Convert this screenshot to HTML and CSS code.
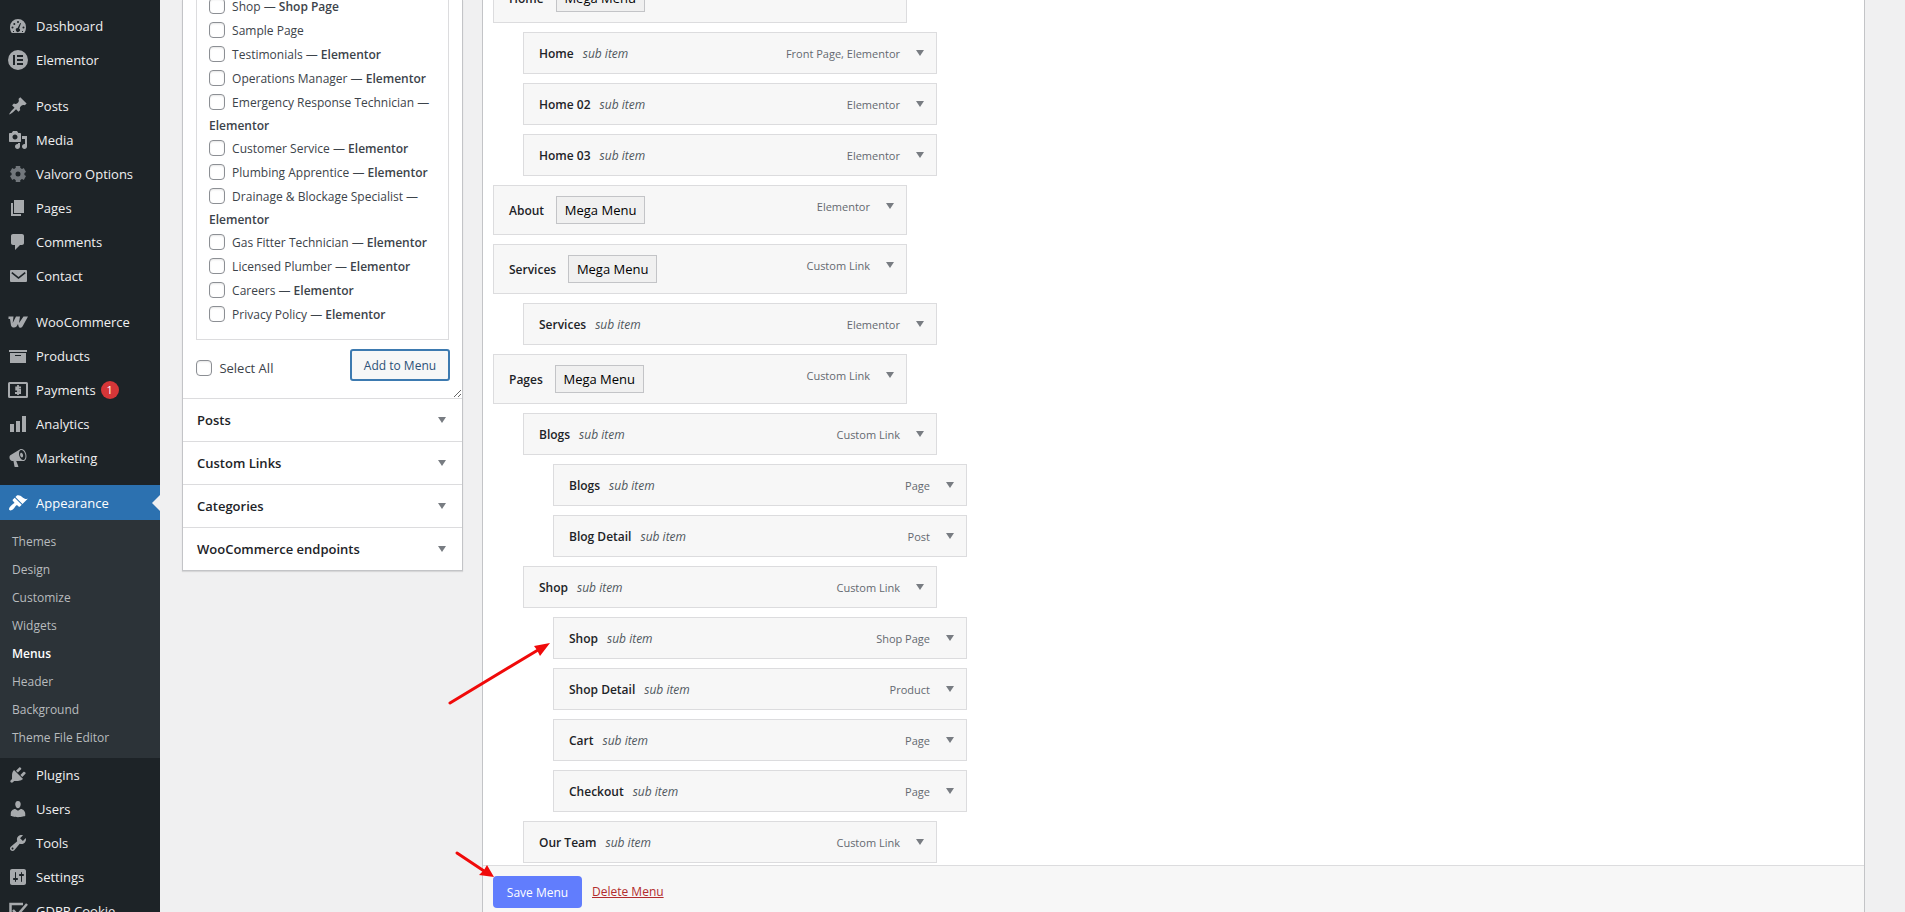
FILE: index.html
```html
<!DOCTYPE html>
<html lang="en">
<head>
    <meta charset="utf-8">
    <meta name="viewport" content="width=device-width, initial-scale=1">
    <title>Menus</title>
    <link rel="stylesheet" href="styles.css">
</head>
<body>
    <nav class="sidebar">
        <ul class="admin-menu">
            <li><a href="#"><svg viewBox="0 0 20 20"><path fill-rule="evenodd" d="M3.8 17h12.4c1.3-1.6 1.8-3.7 1.8-6a8 8 0 0 0-16 0c0 2.3.5 4.4 1.8 6zM9 6a1 1 0 1 0 2 0 1 1 0 1 0-2 0zM5.3 8a1 1 0 1 0 2 0 1 1 0 1 0-2 0zM3.5 11.5a1 1 0 1 0 2 0 1 1 0 1 0-2 0zM14.5 11.5a1 1 0 1 0 2 0 1 1 0 1 0-2 0zM13 7.2l-1.9 5.2a2 2 0 1 1-1.5-.4L12.2 7zM5 15h1v1H5zM14 15h1v1h-1z"/></svg>Dashboard</a></li>
            <li><a href="#"><svg viewBox="0 0 20 20"><path fill-rule="evenodd" d="M10 0a10 10 0 1 0 0 20 10 10 0 0 0 0-20zM5 5h2v10H5zM9 5h6v2H9zM9 9h6v2H9zM9 13h6v2H9z"/></svg>Elementor</a></li>
            <li class="separator"></li>
            <li><a href="#"><svg viewBox="0 0 20 20"><path d="M10.44 3.02l1.82-1.82 6.36 6.35-1.83 1.82c-1.05-.68-2.48-.57-3.41.36l-.75.75c-.92.93-1.04 2.35-.35 3.41l-1.83 1.82-2.41-2.41-2.8 2.79c-.42.42-3.38 2.71-3.8 2.29s1.86-3.39 2.28-3.81l2.79-2.79L4.1 9.36l1.83-1.82c1.05.69 2.48.57 3.4-.36l.75-.75c.93-.92 1.05-2.35.36-3.41z"/></svg>Posts</a></li>
            <li><a href="#"><svg viewBox="0 0 20 20"><path d="M13 11V4c0-.55-.45-1-1-1h-1.67L9 1H5L3.67 3H2c-.55 0-1 .45-1 1v7c0 .55.45 1 1 1h10c.55 0 1-.45 1-1zM7 4.5c1.38 0 2.5 1.12 2.5 2.5S8.38 9.5 7 9.5 4.5 8.38 4.5 7 5.62 4.5 7 4.5zM14 6h5v10.5c0 1.38-1.12 2.5-2.5 2.5S14 17.88 14 16.5s1.12-2.5 2.5-2.5c.17 0 .34.02.5.05V9h-3V6zm-4 8.05V13h2v3.5c0 1.38-1.12 2.5-2.5 2.5S7 17.88 7 16.5 8.12 14 9.5 14c.17 0 .34.02.5.05z"/></svg>Media</a></li>
            <li><a href="#"><svg class="dim" viewBox="0 0 20 20"><circle cx="10" cy="10" r="4.5" fill="none" stroke="currentColor" stroke-width="4"/><path d="M10 2v3M10 15v3M3.1 6l2.6 1.5M14.3 12.5l2.6 1.5M3.1 14l2.6-1.5M14.3 7.5l2.6-1.5" stroke="currentColor" stroke-width="4.5"/></svg>Valvoro Options</a></li>
            <li><a href="#"><svg viewBox="0 0 20 20"><path d="M6 15V2h10v13H6zm-1 1h8v2H3V5h2v11z"/></svg>Pages</a></li>
            <li><a href="#"><svg viewBox="0 0 20 20"><path d="M5 2h9c1.1 0 2 .9 2 2v7c0 1.1-.9 2-2 2h-2l-5 5v-5H5c-1.1 0-2-.9-2-2V4c0-1.1.9-2 2-2z"/></svg>Comments</a></li>
            <li><a href="#"><svg viewBox="0 0 20 20"><path fill-rule="evenodd" d="M3 4h15a1 1 0 0 1 1 1v10a1 1 0 0 1-1 1H3a1 1 0 0 1-1-1V5a1 1 0 0 1 1-1zM4.3 6L3.3 7.2l7.2 5.9 7.2-5.9-1-1.2-6.2 5z"/></svg>Contact</a></li>
            <li class="separator"></li>
            <li><a href="#"><svg viewBox="0 0 20 20"><path d="M.5 4.5h5l-.8 6.5L8 4.5h4l-1 6.5 4.5-6.500H20l-5.500 10c-1.500 2-3.500 1.500-4-.5l-.5-2-1.500 2.500C6.500 16.500 3.500 15.500 3 13.500L2 7H.5z"/></svg>WooCommerce</a></li>
            <li><a href="#"><svg viewBox="0 0 20 20"><path d="M19 4v2H1V4h18zM2 7h16v10H2V7zm11 3V9H7v1h6z"/></svg>Products</a></li>
            <li><a href="#"><svg viewBox="0 0 20 20"><path fill-rule="evenodd" d="M1.5 2h17A1.5 1.5 0 0 1 20 3.5v13a1.5 1.5 0 0 1-1.5 1.5h-17A1.5 1.5 0 0 1 0 16.5v-13A1.5 1.5 0 0 1 1.5 2zM2 4v12h16V4z"/><path d="M13 7.3H8.2v2.4h3.9v3.3H7M10 5v10" fill="none" stroke="currentColor" stroke-width="1.8"/></svg>Payments <span class="badge">1</span></a></li>
            <li><a href="#"><svg viewBox="0 0 20 20"><path d="M18 18V2h-4v16h4zm-6 0V7H8v11h4zm-6 0v-8H2v8h4z"/></svg>Analytics</a></li>
            <li><a href="#"><svg viewBox="0 0 20 20"><path d="M18.15 5.94c.46 1.62.38 3.22-.02 4.48-.42 1.28-1.26 2.18-2.3 2.48-.16.06-.26.06-.4.06-.06.02-.12.02-.18.02-.06.02-.14.02-.22.02h-6.8l2.22 5.5c.02.14-.06.26-.14.34-.08.1-.24.16-.34.16H6.95c-.1 0-.26-.06-.34-.16-.08-.08-.16-.2-.14-.34l-1-5.5H4.25l-.02-.02c-.5.06-1.08-.18-1.54-.62s-.88-1.08-1.06-1.88c-.24-.8-.2-1.56-.02-2.2.18-.62.58-1.08 1.06-1.3l.02-.02 9-5.4c.1-.06.18-.1.24-.16.06-.04.14-.08.24-.12.16-.08.28-.12.5-.18 1.04-.3 2.24.1 3.22.98s1.84 2.24 2.26 3.86zm-2.58 5.98h-.02c.4-.1.74-.34 1.04-.7.58-.7.86-1.76.86-3.04 0-.64-.1-1.3-.28-1.98-.34-1.36-1.02-2.5-1.78-3.24s-1.68-1.1-2.46-.88c-.82.22-1.4.96-1.7 2-.32 1.04-.28 2.36.06 3.72.38 1.36 1 2.5 1.8 3.24.78.74 1.62 1.1 2.48.88zm-2.54-7.08c.22-.04.42-.02.62.04.38.16.76.48 1.02 1s.42 1.2.42 1.78c0 .3-.04.56-.12.8-.18.48-.44.84-.86.94-.34.1-.8-.06-1.14-.4s-.64-.86-.78-1.5c-.18-.62-.12-1.24.02-1.72s.48-.84.82-.94z"/></svg>Marketing</a></li>
            <li class="separator slim"></li>
            <li class="current">
                <a href="#"><svg viewBox="0 0 20 20"><path d="M14.48 11.06L7.41 3.99l1.5-1.5c.5-.56 2.3-.47 3.51.32 1.21.8 1.43 1.28 2.91 2.1 1.18.64 2.45 1.26 4.45.85zm-.71.71L6.7 4.7 4.93 6.47c-.39.39-.39 1.02 0 1.41l1.06 1.06c.39.39.39 1.03 0 1.42-.6.6-1.43 1.11-2.21 1.69-.35.26-.7.53-1.01.84C1.43 14.23.4 16.08 1.4 17.07c.99 1 2.84-.03 4.18-1.36.31-.31.58-.66.85-1.02.57-.78 1.08-1.61 1.69-2.21.39-.39 1.02-.39 1.41 0l1.06 1.06c.39.39 1.02.39 1.41 0z"/></svg>Appearance</a>
                <ul class="submenu">
                    <li><a href="#">Themes</a></li>
                    <li><a href="#">Design</a></li>
                    <li><a href="#">Customize</a></li>
                    <li><a href="#">Widgets</a></li>
                    <li><a href="#" class="active">Menus</a></li>
                    <li><a href="#">Header</a></li>
                    <li><a href="#">Background</a></li>
                    <li><a href="#">Theme File Editor</a></li>
                </ul>
            </li>
            <li><a href="#"><svg viewBox="0 0 20 20"><path d="M13.11 4.36L9.87 7.6 8 5.73l3.24-3.24c.35-.34 1.05-.2 1.56.32.52.51.66 1.21.31 1.55zm-8 1.77l.91-1.12 9.01 9.01-1.19.84c-.71.71-2.63 1.16-3.82 1.16H6.14L4.9 17.26c-.59.59-1.54.59-2.12 0-.59-.58-.59-1.53 0-2.12l1.24-1.24v-3.88c0-1.13.4-3.19 1.09-3.89zm7.26 3.97l3.24-3.24c.34-.35 1.04-.21 1.55.31.52.51.66 1.21.31 1.55l-3.24 3.25z"/></svg>Plugins</a></li>
            <li><a href="#"><svg viewBox="0 0 20 20"><path d="M10 9.25c-2.27 0-2.73-3.44-2.73-3.44C7 4.02 7.82 2 9.97 2c2.16 0 2.98 2.02 2.71 3.81 0 0-.41 3.44-2.68 3.44zm0 2.57L12.72 10c2.39 0 4.52 2.33 4.52 4.53v2.49s-3.65 1.13-7.24 1.13c-3.65 0-7.24-1.13-7.24-1.13v-2.49c0-2.25 1.94-4.48 4.47-4.48z"/></svg>Users</a></li>
            <li><a href="#"><svg viewBox="0 0 20 20"><path d="M16.68 9.77c-1.34 1.34-3.3 1.67-4.95.99l-5.41 6.52c-.99.99-2.59.99-3.58 0s-.99-2.59 0-3.57l6.52-5.42c-.68-1.65-.35-3.61.99-4.95 1.28-1.28 3.12-1.62 4.72-1.06l-2.89 2.89 2.82 2.82 2.86-2.87c.53 1.58.18 3.39-1.08 4.65zM3.81 16.21c.4.39 1.04.39 1.43 0 .4-.4.4-1.04 0-1.43-.39-.4-1.03-.4-1.43 0-.39.39-.39 1.03 0 1.43z"/></svg>Tools</a></li>
            <li><a href="#"><svg viewBox="0 0 20 20"><path d="M18 16V4c0-1.1-.9-2-2-2H4c-1.1 0-2 .9-2 2v12c0 1.1.9 2 2 2h12c1.1 0 2-.9 2-2zM8 11h1c.55 0 1 .45 1 1s-.45 1-1 1H8v1.5c0 .28-.22.5-.5.5s-.5-.22-.5-.5V13H6c-.55 0-1-.45-1-1s.45-1 1-1h1V5.5c0-.28.22-.5.5-.5s.5.22.5.5V11zm5-2h-1c-.55 0-1-.45-1-1s.45-1 1-1h1V5.5c0-.28.22-.5.5-.5s.5.22.5.5V7h1c.55 0 1 .45 1 1s-.45 1-1 1h-1v5.5c0 .28-.22.5-.5.5s-.5-.22-.5-.5V9z"/></svg>Settings</a></li>
            <li><a href="#"><svg viewBox="0 0 20 20"><path d="M15 3H2.5v15h14v-7M5 9l4.5 5L19 3" fill="none" stroke="currentColor" stroke-width="2.5"/></svg>GDPR Cookie</a></li>
        </ul>
    </nav>

    <main>
        <!-- Add menu items -->
        <section class="accordion">
            <div class="pages-panel">
                <ul class="checklist">
                    <li><label><input type="checkbox"> Shop — <b>Shop Page</b></label></li>
                    <li><label><input type="checkbox"> Sample Page</label></li>
                    <li><label><input type="checkbox"> Testimonials — <b>Elementor</b></label></li>
                    <li><label><input type="checkbox"> Operations Manager — <b>Elementor</b></label></li>
                    <li class="wrapped"><label><input type="checkbox"> Emergency Response Technician — <b>Elementor</b></label></li>
                    <li><label><input type="checkbox"> Customer Service — <b>Elementor</b></label></li>
                    <li><label><input type="checkbox"> Plumbing Apprentice — <b>Elementor</b></label></li>
                    <li class="wrapped"><label><input type="checkbox"> Drainage &amp; Blockage Specialist — <b>Elementor</b></label></li>
                    <li><label><input type="checkbox"> Gas Fitter Technician — <b>Elementor</b></label></li>
                    <li><label><input type="checkbox"> Licensed Plumber — <b>Elementor</b></label></li>
                    <li><label><input type="checkbox"> Careers — <b>Elementor</b></label></li>
                    <li><label><input type="checkbox"> Privacy Policy — <b>Elementor</b></label></li>
                </ul>
                <div class="panel-actions">
                    <label><input type="checkbox"> Select All</label>
                    <button type="button" class="add-button">Add to Menu</button>
                </div>
            </div>
            <h3>Posts <span class="arrow"></span></h3>
            <h3>Custom Links <span class="arrow"></span></h3>
            <h3>Categories <span class="arrow"></span></h3>
            <h3>WooCommerce endpoints <span class="arrow"></span></h3>
        </section>

        <!-- Menu structure -->
        <section class="menu-edit">
            <ul class="menu-items">
                <li class="top"><b>Home</b><button type="button">Mega Menu</button></li>
                <li class="depth-1"><b>Home</b><i>sub item</i><span class="type">Front Page, Elementor</span><span class="arrow"></span></li>
                <li class="depth-1"><b>Home 02</b><i>sub item</i><span class="type">Elementor</span><span class="arrow"></span></li>
                <li class="depth-1"><b>Home 03</b><i>sub item</i><span class="type">Elementor</span><span class="arrow"></span></li>
                <li class="top"><b>About</b><button type="button">Mega Menu</button><span class="type">Elementor</span><span class="arrow"></span></li>
                <li class="top"><b>Services</b><button type="button">Mega Menu</button><span class="type">Custom Link</span><span class="arrow"></span></li>
                <li class="depth-1"><b>Services</b><i>sub item</i><span class="type">Elementor</span><span class="arrow"></span></li>
                <li class="top"><b>Pages</b><button type="button">Mega Menu</button><span class="type">Custom Link</span><span class="arrow"></span></li>
                <li class="depth-1"><b>Blogs</b><i>sub item</i><span class="type">Custom Link</span><span class="arrow"></span></li>
                <li class="depth-2"><b>Blogs</b><i>sub item</i><span class="type">Page</span><span class="arrow"></span></li>
                <li class="depth-2"><b>Blog Detail</b><i>sub item</i><span class="type">Post</span><span class="arrow"></span></li>
                <li class="depth-1"><b>Shop</b><i>sub item</i><span class="type">Custom Link</span><span class="arrow"></span></li>
                <li class="depth-2"><b>Shop</b><i>sub item</i><span class="type">Shop Page</span><span class="arrow"></span>
                    <svg class="pointer pointer-shop" viewBox="0 0 106 66"><path d="M4 62L92 9" stroke="#f00a0a" stroke-width="3" stroke-linecap="round"/><path d="M104 2L88 5l3 4 3 6z" fill="#f00a0a"/></svg>
                </li>
                <li class="depth-2"><b>Shop Detail</b><i>sub item</i><span class="type">Product</span><span class="arrow"></span></li>
                <li class="depth-2"><b>Cart</b><i>sub item</i><span class="type">Page</span><span class="arrow"></span></li>
                <li class="depth-2"><b>Checkout</b><i>sub item</i><span class="type">Page</span><span class="arrow"></span></li>
                <li class="depth-1"><b>Our Team</b><i>sub item</i><span class="type">Custom Link</span><span class="arrow"></span></li>
            </ul>
            <footer>
                <button type="button" class="save-button">Save Menu</button>
                <a href="#" class="delete-link">Delete Menu</a>
                <svg class="pointer pointer-save" viewBox="0 0 42 28"><path d="M3 2l27 18" stroke="#f00a0a" stroke-width="3" stroke-linecap="round"/><path d="M40 26L33 14l-3 5-5 5z" fill="#f00a0a"/></svg>
            </footer>
        </section>
    </main>
</body>
</html>
```
FILE: styles.css
```css
* {
    box-sizing: border-box;
}
body {
    margin: 0;
    height: 100vh;
    overflow: hidden;
    display: flex;
    background-color: #f0f0f1;
    color: #3c434a;
    font-family: "Segoe UI", "Open Sans", "Noto Sans", sans-serif;
    font-size: 12px;
}
ul {
    list-style: none;
    margin: 0;
    padding: 0;
}
button {
    font-family: inherit;
}
b, h3 {
    font-weight: 600;
}

/* Sidebar */
.sidebar {
    width: 160px;
    flex: none;
    background-color: #1d2327;
    padding-top: 9px;
}
.admin-menu a {
    display: flex;
    align-items: center;
    height: 34px;
    padding-left: 8px;
    color: #f0f0f1;
    font-size: 13px;
    text-decoration: none;
    white-space: nowrap;
}
.admin-menu svg {
    width: 20px;
    height: 20px;
    margin-right: 8px;
    color: #a7aaad;
    fill: currentColor;
}
.admin-menu svg.dim {
    color: #72777c;
}
.separator {
    height: 12px;
}
.slim {
    height: 10px;
}
.badge {
    width: 18px;
    margin-left: 5px;
    border-radius: 9px;
    background-color: #d63638;
    color: #fff;
    font-size: 11px;
    line-height: 18px;
    text-align: center;
}
.admin-menu .current > a {
    position: relative;
    height: 35px;
    background-color: #2c71b0;
    color: #fff;
}
.admin-menu .current svg {
    color: #fff;
}
.current > a::after {
    content: "";
    position: absolute;
    right: 0;
    border: 8px solid transparent;
    border-right-color: #f0f0f1;
    border-left-width: 0;
}
.submenu {
    padding: 7px 0;
    background-color: #2c3338;
}
.admin-menu .submenu a {
    height: 28px;
    padding-left: 12px;
    color: #b8bbbe;
    font-size: 12px;
}
.admin-menu .submenu .active {
    color: #fff;
    font-weight: 600;
}

main {
    flex: 1;
    display: flex;
    align-items: flex-start;
    gap: 19px;
    padding: 0 40px 0 22px;
}

/* Left column */
.accordion {
    width: 281px;
    flex: none;
    background-color: #fff;
    border: 1px solid #c3c4c7;
    border-top: 0;
    box-shadow: 0 1px 1px rgba(0, 0, 0, 0.1);
}
.pages-panel {
    padding: 0 13px 17px;
    resize: vertical;
    overflow: hidden;
}
.checklist {
    margin-top: -6px;
    padding: 0 12px 12px;
    border: 1px solid #dcdcde;
    line-height: 24px;
}
.checklist .wrapped {
    line-height: 23px;
}
input[type="checkbox"] {
    appearance: none;
    width: 16px;
    height: 16px;
    margin: 0 4px 0 0;
    border: 1px solid #8c8f94;
    border-radius: 4px;
    background-color: #fff;
    box-shadow: inset 0 1px 2px rgba(0, 0, 0, 0.1);
    vertical-align: -3px;
}
.panel-actions {
    display: flex;
    justify-content: space-between;
    align-items: center;
    margin-top: 9px;
    font-size: 13px;
}
.panel-actions label {
    margin-top: 5px;
}
.add-button {
    width: 100px;
    height: 32px;
    margin-right: -1px;
    padding: 0;
    border: 2px solid #3d7ab0;
    border-radius: 3px;
    background-color: #f7f7f7;
    color: #2c5177;
    font-size: 12px;
}
.accordion h3 {
    display: flex;
    justify-content: space-between;
    align-items: center;
    height: 43px;
    margin: 0;
    padding: 0 16px 0 14px;
    border-top: 1px solid #dcdcde;
    color: #1d2327;
    font-size: 13px;
}
.arrow {
    border: 4px solid transparent;
    border-top: 6px solid #787c82;
    border-bottom: 0;
}

/* Right column */
.menu-edit {
    flex: 1;
    background-color: #fff;
    border: 1px solid #c3c4c7;
    border-width: 0 1px;
}
.menu-items {
    display: flex;
    flex-direction: column;
    gap: 9px;
    margin-top: -27px;
    padding: 0 10px 2px;
}
.menu-items li {
    position: relative;
    display: flex;
    align-items: center;
    width: 414px;
    height: 42px;
    padding: 0 12px 0 15px;
    border: 1px solid #dcdcde;
    background-color: #f7f7f7;
}
.menu-items .top {
    height: 50px;
}
.menu-items .depth-1 {
    margin-left: 30px;
}
.menu-items .depth-2 {
    margin-left: 60px;
}
.menu-items b {
    color: #1d2327;
}
.menu-items i {
    margin-left: 9px;
    color: #50575e;
}
.menu-items button {
    width: 89px;
    height: 28px;
    margin-left: 12px;
    padding: 0;
    border: 1px solid #c3c4c7;
    background-color: #f0f0f0;
    color: #000;
    font-size: 13px;
}
.type {
    margin-left: auto;
    margin-right: 16px;
    color: #646970;
    font-size: 11px;
}
.top .type, .top .arrow {
    margin-bottom: 8px;
}
footer {
    position: relative;
    display: flex;
    align-items: flex-start;
    gap: 10px;
    height: 54px;
    padding: 10px;
    border-top: 1px solid #dcdcde;
    background-color: #f7f7f7;
}
.save-button {
    width: 89px;
    height: 32px;
    padding: 0;
    border: 0;
    border-radius: 4px;
    background-color: #617dfd;
    color: #fff;
    font-size: 12px;
}
.delete-link {
    color: #b32d2e;
    font-size: 12px;
    line-height: 32px;
}

/* Red pointers over the page */
.pointer {
    position: absolute;
    fill: none;
}
.pointer-shop {
    width: 106px;
    height: 66px;
    left: -108px;
    top: 23px;
}
.pointer-save {
    width: 42px;
    height: 28px;
    left: -29px;
    top: -15px;
}
```
